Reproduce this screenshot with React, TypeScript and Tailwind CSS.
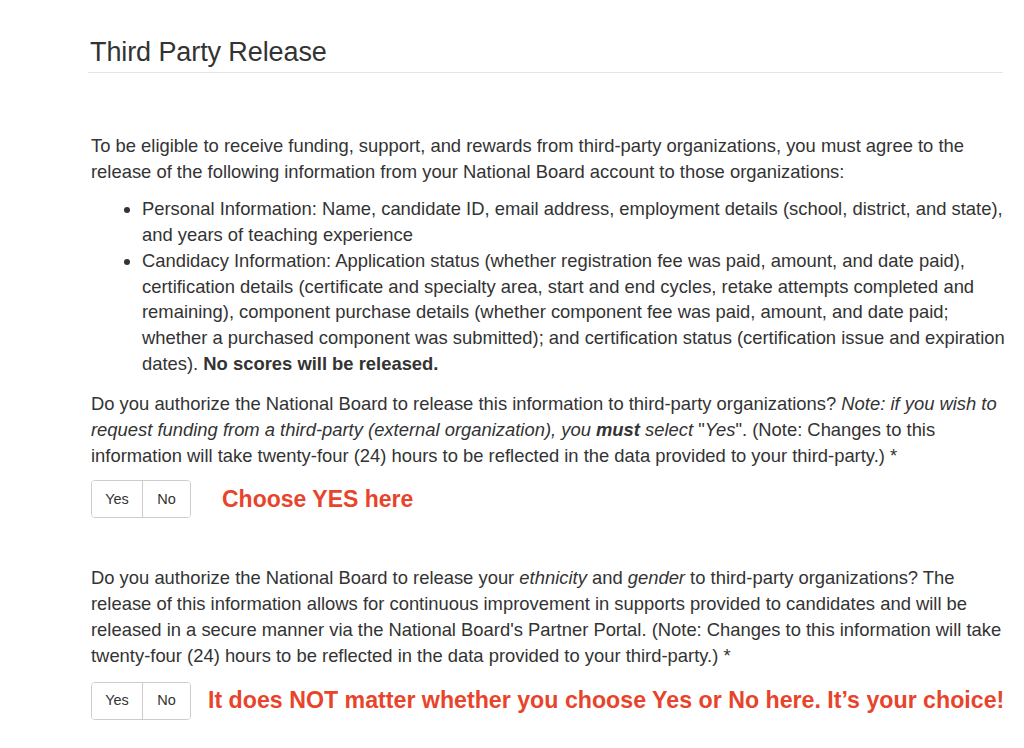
import React, { useState } from 'react';

const FONT = { fontFamily: '"Liberation Sans", Arial, sans-serif' };

const BTN = 'px-3 h-[36px] text-[14.5px] text-[#333] bg-white';

function YesNo() {
  const [value, setValue] = useState<'yes' | 'no' | null>(null);
  return (
    <div className="inline-flex border border-[#ccc] rounded-[4px] overflow-hidden shrink-0">
      <button onClick={() => setValue('yes')} className={BTN + ' w-[51px] border-r border-[#ccc]' + (value === 'yes' ? ' bg-[#e6e6e6]' : '')}>Yes</button>
      <button onClick={() => setValue('no')} className={BTN + ' w-[47px]' + (value === 'no' ? ' bg-[#e6e6e6]' : '')}>No</button>
    </div>
  );
}

export default function App() {
  return (
    <div className="w-[1024px] h-[748px] bg-white overflow-hidden text-[#333]" style={FONT}>
      <div className="ml-[88px] w-[917px] pt-[36px]">
        <h2 className="text-[27px] leading-[32px] text-[#333] pl-[2px] pb-[4px] mr-[2px] border-b border-[#e5e5e5] tracking-[-0.1px]">Third Party Release</h2>

        <div className="pl-[3px] text-[18.4px] leading-[25.7px]">
          <p className="mt-[60px]">
            To be eligible to receive funding, support, and rewards from third-party organizations, you must agree to the release of the following information from your National Board account to those organizations:
          </p>
          <ul className="list-disc pl-[51px] mt-[12px]">
            <li>Personal Information: Name, candidate ID, email address, employment details (school, district, and state), and years of teaching experience</li>
            <li>Candidacy Information: Application status (whether registration fee was paid, amount, and date paid), certification details (certificate and specialty area, start and end cycles, retake attempts completed and remaining), component purchase details (whether component fee was paid, amount, and date paid; whether a purchased component was submitted); and certification status (certification issue and expiration dates). <b>No scores will be released.</b></li>
          </ul>
          <p className="mt-[15px]">
            Do you authorize the National Board to release this information to third-party organizations? <i>Note: if you wish to request funding from a third-party (external organization), you <b>must</b> select </i>"<i>Yes</i>". (Note: Changes to this information will take twenty-four (24) hours to be reflected in the data provided to your third-party.) *
          </p>
          <div className="flex items-center mt-[12px]">
            <YesNo />
            <span className="ml-[31px] text-[23px] font-bold text-[#e8442b]">Choose YES here</span>
          </div>

          <p className="mt-[47px]">
            Do you authorize the National Board to release your <i>ethnicity</i> and <i>gender</i> to third-party organizations? The release of this information allows for continuous improvement in supports provided to candidates and will be released in a secure manner via the National Board's Partner Portal. (Note: Changes to this information will take twenty-four (24) hours to be reflected in the data provided to your third-party.) *
          </p>
          <div className="flex items-center mt-[14px]">
            <YesNo />
            <span className="ml-[17px] text-[23.2px] font-bold text-[#e8442b] whitespace-nowrap">It does NOT matter whether you choose Yes or No here. It’s your choice!</span>
          </div>
        </div>
      </div>
    </div>
  );
}
